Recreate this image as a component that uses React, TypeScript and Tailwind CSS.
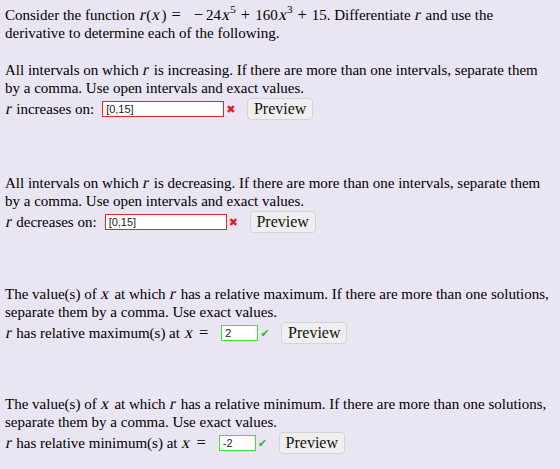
import React from "react";

type Status = "wrong" | "right";

// math variables: upright serif slanted by hand, a touch larger than the prose
const V: React.FC<{ children: React.ReactNode }> = ({ children }) => (
    <span className="inline-block -skew-x-12 text-[16.5px] mx-[1px]">{children}</span>
);

const Op: React.FC<{ children: React.ReactNode; cls?: string }> = ({ children, cls }) => (
    <span className={`text-[16.5px] ${cls ?? "mx-[5px]"}`}>{children}</span>
);

const Sup: React.FC<{ children: React.ReactNode }> = ({ children }) => (
    <sup className="text-[11px] relative top-[-7px] -ml-[1px]">{children}</sup>
);

const AnswerRow: React.FC<{
    label: React.ReactNode;
    value: string;
    width: string;
    status: Status;
}> = ({ label, value, width, status }) => {
    const wrong = status === "wrong";
    return (
        <div className="flex items-center h-[24px]">
            <span>{label}</span>
            <input
                readOnly
                value={value}
                className={`ml-[8px] h-[16px] ${width} bg-white border px-[3px] text-[11px] text-[#222] font-['Liberation_Sans',Arial,sans-serif] outline-none ${
                    wrong ? "border-[#e5262f]" : "border-[#3de23a]"
                }`}
            />
            <span
                className={`ml-[2px] w-[10px] text-[11px] leading-none font-['DejaVu_Sans',sans-serif] ${
                    wrong ? "text-[#e02020]" : "text-[#35b531]"
                }`}
            >
                {wrong ? "✖" : "✔"}
            </span>
            <button className="ml-[11px] h-[22px] w-[66px] rounded-[4px] bg-[#efefef] border border-[#d4d2d8] text-[16px] leading-none text-[#111]">
                Preview
            </button>
        </div>
    );
};

export default function App() {
    return (
        <div className="w-[560px] h-[469px] bg-[#e9e5f2] text-black pl-[5px] pt-[6px] text-[15px] leading-[18px] font-['Liberation_Serif','Times_New_Roman',serif]">
            <p>
                Consider the function <V>r</V>(<V>x</V>)<Op>=</Op>
                <Op cls="ml-[8px] mr-[3px]">−</Op>24<V>x</V>
                <Sup>5</Sup>
                <Op>+</Op>160<V>x</V>
                <Sup>3</Sup>
                <Op>+</Op>15. Differentiate <V>r</V> and use the
                <br />
                derivative to determine each of the following.
            </p>

            <div className="mt-[19px]">
                <p>
                    All intervals on which <V>r</V> is increasing. If there are more than
                    one intervals, separate them
                    <br />
                    by a comma. Use open intervals and exact values.
                </p>
                <AnswerRow
                    label={<><V>r</V> increases on:</>}
                    value="[0,15]"
                    width="w-[122px]"
                    status="wrong"
                />
            </div>

            <div className="mt-[53px]">
                <p>
                    All intervals on which <V>r</V> is decreasing. If there are more than
                    one intervals, separate them
                    <br />
                    by a comma. Use open intervals and exact values.
                </p>
                <AnswerRow
                    label={<><V>r</V> decreases on:</>}
                    value="[0,15]"
                    width="w-[122px]"
                    status="wrong"
                />
            </div>

            <div className="mt-[51px]">
                <p>
                    The value(s) of <V>x</V> at which <V>r</V> has a relative maximum. If
                    there are more than one solutions,
                    <br />
                    separate them by a comma. Use exact values.
                </p>
                <AnswerRow
                    label={<><V>r</V> has relative maximum(s) at <V>x</V><Op>=</Op></>}
                    value="2"
                    width="w-[37px]"
                    status="right"
                />
            </div>

            <div className="mt-[50px]">
                <p>
                    The value(s) of <V>x</V> at which <V>r</V> has a relative minimum. If
                    there are more than one solutions,
                    <br />
                    separate them by a comma. Use exact values.
                </p>
                <AnswerRow
                    label={<><V>r</V> has relative minimum(s) at <V>x</V><Op>=</Op></>}
                    value="-2"
                    width="w-[37px]"
                    status="right"
                />
            </div>
        </div>
    );
}
